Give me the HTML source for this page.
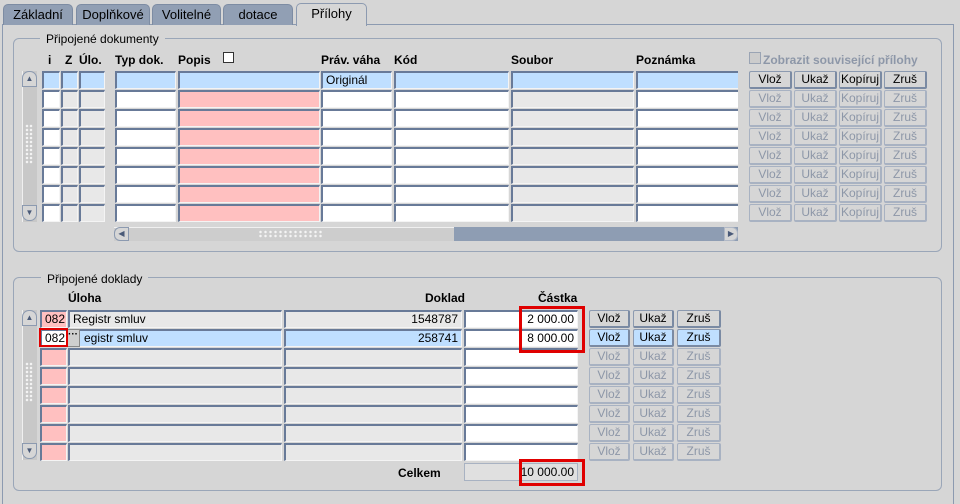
<!DOCTYPE html>
<html><head><meta charset="utf-8"><style>
*{box-sizing:border-box;margin:0;padding:0}
body{width:960px;height:498px;background:#d6d6d6;font-family:"Liberation Sans",sans-serif;font-size:12px;color:#000;position:relative;overflow:hidden}
.a{position:absolute}
.tab{position:absolute;top:4px;height:21px;background:#919fb4;border-radius:5px 5px 0 0;border:1px solid #7d8ca3;border-bottom:none;text-align:center;line-height:20px;font-size:13px}
.tab.on{background:#d6d6d6;top:3px;height:23px;border-color:#8c9ab0;z-index:2}
.panel{position:absolute;left:2px;top:24px;width:952px;height:480px;border:1px solid #8c9ab0;border-bottom:none}
.grp{position:absolute;left:13px;width:929px;border:1px solid #9aa6b8;border-radius:6px}
.lbl{position:absolute;background:#d6d6d6;padding:0 6px;font-size:12px}
.h{position:absolute;font-weight:bold;font-size:12px}
.r{position:absolute;left:0;width:960px;height:19px}
.f{position:absolute;top:0;height:18px;border-top:2px solid #687a98;border-left:2px solid #687a98;border-right:1px solid #f4f4f4;border-bottom:1px solid #f4f4f4;padding:0 3px;line-height:15px;white-space:nowrap;overflow:hidden;font-size:12px}
.w{background:#fff}.g{background:#e8e8e8}.p{background:#ffc0c0}.b{background:#bfdfff}
.rt{text-align:right}
.bt{position:absolute;top:0;height:18px;border:1px solid #8c9ab0;border-bottom:2px solid #7a8aa3;border-right:2px solid #7a8aa3;background:#d6d6d6;text-align:center;line-height:15px;font-size:12px;border-radius:2px}
.dis{color:#8d97a8;border-color:#a8b2c2}
.bb{background:#bfdfff}
.vs{position:absolute;width:15px;background:#c8c8c8;border-left:1px solid #f0f0f0}
.arr{position:absolute;left:0;width:15px;height:16px;border:1px solid #8c9ab0;background:#d6d6d6;text-align:center;font-size:8px;color:#4a5a78;line-height:14px}
.red{position:absolute;border:3px solid #e00000}
.dots{position:absolute;width:8px;height:40px;background:radial-gradient(circle,#f4f4f4 1px,transparent 1.5px) 0 0/4px 4px}
</style></head><body>
<div class="panel"></div>
<div class="tab" style="left:3px;width:70px">Základní</div>
<div class="tab" style="left:76px;width:74px">Doplňkové</div>
<div class="tab" style="left:152px;width:69px">Volitelné</div>
<div class="tab" style="left:223px;width:70px">dotace</div>
<div class="tab on" style="left:296px;width:71px">Přílohy</div>

<div class="grp" style="top:38px;height:214px"></div>
<div class="lbl" style="left:40px;top:32px">Připojené dokumenty</div>
<div class="h" style="left:48px;top:53px">i</div>
<div class="h" style="left:65px;top:53px">Z</div>
<div class="h" style="left:79px;top:53px">Úlo.</div>
<div class="h" style="left:115px;top:53px">Typ dok.</div>
<div class="h" style="left:178px;top:53px">Popis</div>
<div class="a" style="left:223px;top:52px;width:11px;height:11px;border:1px solid #333;background:#fff"></div>
<div class="h" style="left:321px;top:53px">Práv. váha</div>
<div class="h" style="left:394px;top:53px">Kód</div>
<div class="h" style="left:511px;top:53px">Soubor</div>
<div class="h" style="left:636px;top:53px">Poznámka</div>
<div class="a" style="left:749px;top:52px;width:12px;height:12px;border:1px solid #9aa4b4;background:#ccc"></div>
<div class="h" style="left:763px;top:53px;color:#8d97a8">Zobrazit související přílohy</div>

<div class="vs" style="left:22px;top:71px;height:151px"></div>
<div class="dots" style="left:25px;top:124px"></div>
<div class="arr" style="left:22px;top:71px;border-radius:7px 7px 0 0">▲</div>
<div class="arr" style="left:22px;top:205px;border-radius:0 0 7px 7px">▼</div>

<div class="r" style="top:71px"><div class="f b" style="left:42px;width:18px"></div><div class="f b" style="left:61px;width:17px"></div><div class="f b" style="left:79px;width:26px"></div><div class="f b" style="left:115px;width:61px"></div><div class="f b" style="left:178px;width:142px"></div><div class="f b" style="left:321px;width:71px">Originál</div><div class="f b" style="left:394px;width:115px"></div><div class="f b" style="left:511px;width:123px"></div><div class="f b" style="left:636px;width:102px;border-right:none"></div>
<div class="bt" style="left:749px;width:43px">Vlož</div><div class="bt" style="left:794px;width:43px">Ukaž</div><div class="bt" style="left:839px;width:43px">Kopíruj</div><div class="bt" style="left:884px;width:43px">Zruš</div></div>

<div class="r" style="top:90px"><div class="f w" style="left:42px;width:18px"></div><div class="f g" style="left:61px;width:17px"></div><div class="f g" style="left:79px;width:26px"></div><div class="f w" style="left:115px;width:61px"></div><div class="f p" style="left:178px;width:142px"></div><div class="f w" style="left:321px;width:71px"></div><div class="f w" style="left:394px;width:115px"></div><div class="f g" style="left:511px;width:123px"></div><div class="f w" style="left:636px;width:102px;border-right:none"></div>
<div class="bt dis" style="left:749px;width:43px">Vlož</div><div class="bt dis" style="left:794px;width:43px">Ukaž</div><div class="bt dis" style="left:839px;width:43px">Kopíruj</div><div class="bt dis" style="left:884px;width:43px">Zruš</div></div>
<div class="r" style="top:109px"><div class="f w" style="left:42px;width:18px"></div><div class="f g" style="left:61px;width:17px"></div><div class="f g" style="left:79px;width:26px"></div><div class="f w" style="left:115px;width:61px"></div><div class="f p" style="left:178px;width:142px"></div><div class="f w" style="left:321px;width:71px"></div><div class="f w" style="left:394px;width:115px"></div><div class="f g" style="left:511px;width:123px"></div><div class="f w" style="left:636px;width:102px;border-right:none"></div>
<div class="bt dis" style="left:749px;width:43px">Vlož</div><div class="bt dis" style="left:794px;width:43px">Ukaž</div><div class="bt dis" style="left:839px;width:43px">Kopíruj</div><div class="bt dis" style="left:884px;width:43px">Zruš</div></div>
<div class="r" style="top:128px"><div class="f w" style="left:42px;width:18px"></div><div class="f g" style="left:61px;width:17px"></div><div class="f g" style="left:79px;width:26px"></div><div class="f w" style="left:115px;width:61px"></div><div class="f p" style="left:178px;width:142px"></div><div class="f w" style="left:321px;width:71px"></div><div class="f w" style="left:394px;width:115px"></div><div class="f g" style="left:511px;width:123px"></div><div class="f w" style="left:636px;width:102px;border-right:none"></div>
<div class="bt dis" style="left:749px;width:43px">Vlož</div><div class="bt dis" style="left:794px;width:43px">Ukaž</div><div class="bt dis" style="left:839px;width:43px">Kopíruj</div><div class="bt dis" style="left:884px;width:43px">Zruš</div></div>
<div class="r" style="top:147px"><div class="f w" style="left:42px;width:18px"></div><div class="f g" style="left:61px;width:17px"></div><div class="f g" style="left:79px;width:26px"></div><div class="f w" style="left:115px;width:61px"></div><div class="f p" style="left:178px;width:142px"></div><div class="f w" style="left:321px;width:71px"></div><div class="f w" style="left:394px;width:115px"></div><div class="f g" style="left:511px;width:123px"></div><div class="f w" style="left:636px;width:102px;border-right:none"></div>
<div class="bt dis" style="left:749px;width:43px">Vlož</div><div class="bt dis" style="left:794px;width:43px">Ukaž</div><div class="bt dis" style="left:839px;width:43px">Kopíruj</div><div class="bt dis" style="left:884px;width:43px">Zruš</div></div>
<div class="r" style="top:166px"><div class="f w" style="left:42px;width:18px"></div><div class="f g" style="left:61px;width:17px"></div><div class="f g" style="left:79px;width:26px"></div><div class="f w" style="left:115px;width:61px"></div><div class="f p" style="left:178px;width:142px"></div><div class="f w" style="left:321px;width:71px"></div><div class="f w" style="left:394px;width:115px"></div><div class="f g" style="left:511px;width:123px"></div><div class="f w" style="left:636px;width:102px;border-right:none"></div>
<div class="bt dis" style="left:749px;width:43px">Vlož</div><div class="bt dis" style="left:794px;width:43px">Ukaž</div><div class="bt dis" style="left:839px;width:43px">Kopíruj</div><div class="bt dis" style="left:884px;width:43px">Zruš</div></div>
<div class="r" style="top:185px"><div class="f w" style="left:42px;width:18px"></div><div class="f g" style="left:61px;width:17px"></div><div class="f g" style="left:79px;width:26px"></div><div class="f w" style="left:115px;width:61px"></div><div class="f p" style="left:178px;width:142px"></div><div class="f w" style="left:321px;width:71px"></div><div class="f w" style="left:394px;width:115px"></div><div class="f g" style="left:511px;width:123px"></div><div class="f w" style="left:636px;width:102px;border-right:none"></div>
<div class="bt dis" style="left:749px;width:43px">Vlož</div><div class="bt dis" style="left:794px;width:43px">Ukaž</div><div class="bt dis" style="left:839px;width:43px">Kopíruj</div><div class="bt dis" style="left:884px;width:43px">Zruš</div></div>
<div class="r" style="top:204px"><div class="f w" style="left:42px;width:18px"></div><div class="f g" style="left:61px;width:17px"></div><div class="f g" style="left:79px;width:26px"></div><div class="f w" style="left:115px;width:61px"></div><div class="f p" style="left:178px;width:142px"></div><div class="f w" style="left:321px;width:71px"></div><div class="f w" style="left:394px;width:115px"></div><div class="f g" style="left:511px;width:123px"></div><div class="f w" style="left:636px;width:102px;border-right:none"></div>
<div class="bt dis" style="left:749px;width:43px">Vlož</div><div class="bt dis" style="left:794px;width:43px">Ukaž</div><div class="bt dis" style="left:839px;width:43px">Kopíruj</div><div class="bt dis" style="left:884px;width:43px">Zruš</div></div>

<div class="a" style="left:114px;top:227px;width:624px;height:14px;background:#8e9db3"></div>
<div class="a" style="left:114px;top:227px;width:340px;height:14px;background:#cdcdcd;border-top:1px solid #f0f0f0"></div>
<div class="a" style="left:114px;top:227px;width:15px;height:14px;border:1px solid #8c9ab0;border-radius:6px 0 0 6px;background:#d6d6d6;font-size:8px;line-height:12px;text-align:center;color:#4a5a78">◀</div>
<div class="a" style="left:724px;top:227px;width:14px;height:14px;border:1px solid #b0b8c6;border-radius:0 6px 6px 0;background:#d6d6d6;font-size:8px;line-height:12px;text-align:center;color:#4a5a78">▶</div>
<div class="a" style="left:258px;top:230px;width:64px;height:8px;background:radial-gradient(circle,#f4f4f4 1px,transparent 1.5px) 0 0/5px 4px"></div>

<div class="grp" style="top:277px;height:214px"></div>
<div class="lbl" style="left:41px;top:272px">Připojené doklady</div>
<div class="h" style="left:68px;top:291px">Úloha</div>
<div class="h" style="left:425px;top:291px">Doklad</div>
<div class="h" style="left:538px;top:291px">Částka</div>

<div class="vs" style="left:22px;top:310px;height:150px"></div>
<div class="dots" style="left:25px;top:362px"></div>
<div class="arr" style="left:22px;top:310px;border-radius:7px 7px 0 0">▲</div>
<div class="arr" style="left:22px;top:443px;border-radius:0 0 7px 7px">▼</div>

<div class="r" style="top:310px"><div class="f p" style="left:40px;width:27px">082</div><div class="f g" style="left:68px;width:214px">Registr smluv</div><div class="f g rt" style="left:284px;width:178px">1548787</div><div class="f w rt" style="left:464px;width:114px">2 000.00</div>
<div class="bt" style="left:589px;width:41px">Vlož</div><div class="bt" style="left:633px;width:41px">Ukaž</div><div class="bt" style="left:677px;width:44px">Zruš</div></div>
<div class="r" style="top:329px"><div class="f w" style="left:40px;width:27px">082</div><div class="f b" style="left:68px;width:214px;padding-left:14px">egistr smluv</div><div class="a" style="left:66px;top:0;width:14px;height:18px;background:#cfcfcf;border:1px solid #888;font-size:10px;font-weight:bold;line-height:10px;text-align:center">···</div><div class="f b rt" style="left:284px;width:178px">258741</div><div class="f w rt" style="left:464px;width:114px">8 000.00</div>
<div class="bt bb" style="left:589px;width:41px">Vlož</div><div class="bt bb" style="left:633px;width:41px">Ukaž</div><div class="bt bb" style="left:677px;width:44px">Zruš</div></div>
<div class="r" style="top:348px"><div class="f p" style="left:40px;width:27px"></div><div class="f g" style="left:68px;width:214px"></div><div class="f g" style="left:284px;width:178px"></div><div class="f w" style="left:464px;width:114px"></div><div class="bt dis" style="left:589px;width:41px">Vlož</div><div class="bt dis" style="left:633px;width:41px">Ukaž</div><div class="bt dis" style="left:677px;width:44px">Zruš</div></div>
<div class="r" style="top:367px"><div class="f p" style="left:40px;width:27px"></div><div class="f g" style="left:68px;width:214px"></div><div class="f g" style="left:284px;width:178px"></div><div class="f w" style="left:464px;width:114px"></div><div class="bt dis" style="left:589px;width:41px">Vlož</div><div class="bt dis" style="left:633px;width:41px">Ukaž</div><div class="bt dis" style="left:677px;width:44px">Zruš</div></div>
<div class="r" style="top:386px"><div class="f p" style="left:40px;width:27px"></div><div class="f g" style="left:68px;width:214px"></div><div class="f g" style="left:284px;width:178px"></div><div class="f w" style="left:464px;width:114px"></div><div class="bt dis" style="left:589px;width:41px">Vlož</div><div class="bt dis" style="left:633px;width:41px">Ukaž</div><div class="bt dis" style="left:677px;width:44px">Zruš</div></div>
<div class="r" style="top:405px"><div class="f p" style="left:40px;width:27px"></div><div class="f g" style="left:68px;width:214px"></div><div class="f g" style="left:284px;width:178px"></div><div class="f w" style="left:464px;width:114px"></div><div class="bt dis" style="left:589px;width:41px">Vlož</div><div class="bt dis" style="left:633px;width:41px">Ukaž</div><div class="bt dis" style="left:677px;width:44px">Zruš</div></div>
<div class="r" style="top:424px"><div class="f p" style="left:40px;width:27px"></div><div class="f g" style="left:68px;width:214px"></div><div class="f g" style="left:284px;width:178px"></div><div class="f w" style="left:464px;width:114px"></div><div class="bt dis" style="left:589px;width:41px">Vlož</div><div class="bt dis" style="left:633px;width:41px">Ukaž</div><div class="bt dis" style="left:677px;width:44px">Zruš</div></div>
<div class="r" style="top:443px"><div class="f p" style="left:40px;width:27px"></div><div class="f g" style="left:68px;width:214px"></div><div class="f g" style="left:284px;width:178px"></div><div class="f w" style="left:464px;width:114px"></div><div class="bt dis" style="left:589px;width:41px">Vlož</div><div class="bt dis" style="left:633px;width:41px">Ukaž</div><div class="bt dis" style="left:677px;width:44px">Zruš</div></div>

<div class="h" style="left:398px;top:466px">Celkem</div>
<div class="a" style="left:464px;top:463px;width:114px;height:18px;background:#e0e0e0;border:1px solid #a8b2c2;text-align:right;padding-right:3px;line-height:16px">10 000.00</div>

<div class="red" style="left:519px;top:306px;width:66px;height:47px"></div>
<div class="red" style="left:519px;top:459px;width:66px;height:27px"></div>
<div class="a" style="left:39px;top:328px;width:29px;height:19px;border:2px solid #e00000"></div>
</body></html>
